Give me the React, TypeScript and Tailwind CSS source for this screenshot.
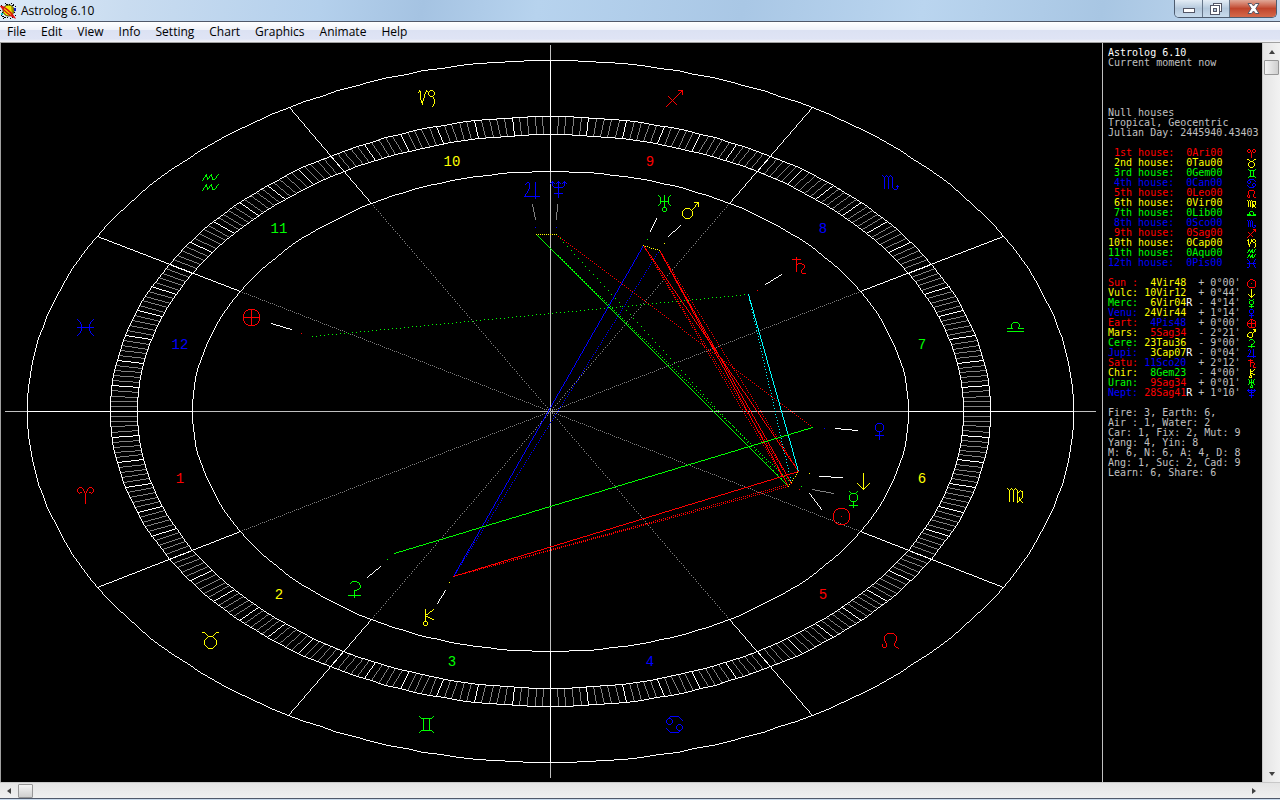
import React from "react";

type Point = [number, number];
type Glyph = number[][];

const RED = "#ff0000";
const YELLOW = "#ffff00";
const GREEN = "#00ff00";
const BLUE = "#0000ff";
const CYAN = "#00ffff";
const WHITE = "#ffffff";
const SILVER = "#c0c0c0";
const GRAY = "#808080";

const CX = 550;
const CY = 411;

/* ---------- pixel plotting ---------- */

function plotLine(x0: number, y0: number, x1: number, y1: number, skip = 0): string {
  let x = Math.round(x0);
  let y = Math.round(y0);
  const ex = Math.round(x1);
  const ey = Math.round(y1);
  const dx = Math.abs(ex - x);
  const dy = -Math.abs(ey - y);
  const sx = x < ex ? 1 : -1;
  const sy = y < ey ? 1 : -1;
  let err = dx + dy;
  let n = 0;
  let d = "";
  for (;;) {
    if (n % (skip + 1) === 0) d += `M${x} ${y}h1v1h-1z`;
    n++;
    if (x === ex && y === ey) break;
    const e2 = 2 * err;
    if (e2 >= dy) {
      err += dy;
      x += sx;
    }
    if (e2 <= dx) {
      err += dx;
      y += sy;
    }
  }
  return d;
}

function onEllipse(deg: number, rx: number, ry: number): Point {
  const a = (deg * Math.PI) / 180;
  return [CX + rx * Math.cos(a), CY - ry * Math.sin(a)];
}

/* Pixel centre for a label, cut towards the middle of the wheel. */
function labelPoint(deg: number, rx: number, ry: number): Point {
  const p = onEllipse(deg, rx, ry);
  return [CX + Math.trunc(p[0] - CX), CY + Math.trunc(p[1] - CY)];
}

function plotEllipse(rx: number, ry: number): string {
  let d = "";
  for (let a = 0; a < 360; a += 2) {
    const p = onEllipse(a, rx, ry);
    const q = onEllipse(a + 2, rx, ry);
    d += plotLine(p[0], p[1], q[0], q[1]);
  }
  return d;
}

function plotGlyph(glyph: Glyph, cx: number, cy: number, scale: number): string {
  let d = "";
  for (const line of glyph) {
    if (line.length === 2) {
      d += plotLine(cx + line[0] * scale, cy + line[1] * scale, cx + line[0] * scale, cy + line[1] * scale);
    }
    for (let i = 0; i + 3 < line.length; i += 2) {
      d += plotLine(
        cx + line[i] * scale,
        cy + line[i + 1] * scale,
        cx + line[i + 2] * scale,
        cy + line[i + 3] * scale,
      );
    }
  }
  return d;
}

/* ---------- glyphs on a -4..4 grid ---------- */

const DISC = [-1, -4, 1, -4, 2.5, -3.5, 3.5, -2.5, 4, -1, 4, 1, 3.5, 2.5, 2.5, 3.5, 1, 4, -1, 4, -2.5, 3.5, -3.5, 2.5, -4, 1, -4, -1, -3.5, -2.5, -2.5, -3.5, -1, -4];

const SIGNS: Record<string, Glyph> = {
  Ari: [
    [0, 4, 0, -1, -1, -3, -2, -4, -3, -4, -4, -3, -4, -2, -3, -1, -2, -1.5],
    [0, -1, 1, -3, 2, -4, 3, -4, 4, -3, 4, -2, 3, -1, 2, -1.5],
  ],
  Tau: [
    [-4, -4, -3, -4, -2, -3, -1, -2, 1, -2, 2, -3, 3, -4, 4, -4],
    [-1, -2, -3, 0, -3, 2, -1, 4, 1, 4, 3, 2, 3, 0, 1, -2],
  ],
  Gem: [
    [-3.5, -4, -2.5, -3, 2.5, -3, 3.5, -4],
    [-3.5, 4, -2.5, 3, 2.5, 3, 3.5, 4],
    [-1.5, -3, -1.5, 3],
    [1.5, -3, 1.5, 3],
  ],
  Can: [
    [4, -2, 2, -4, -2, -4, -4, -2, -4, -1, -3, 0, -2, 0, -1, -1, -1, -2, -2, -3, -3, -3, -4, -2],
    [-4, 2, -2, 4, 2, 4, 4, 2, 4, 1, 3, 0, 2, 0, 1, 1, 1, 2, 2, 3, 3, 3, 4, 2],
  ],
  Leo: [[-4, 2, -4, 3, -3.5, 3.5, -2.5, 3.5, -2, 2.5, -2, 1.5, -3, 0, -3, -2, -1.5, -3.5, 1.5, -3.5, 3, -2, 3, 0, 2, 1.5, 2, 2.5, 4, 4]],
  Vir: [
    [-4, -3.5, -3, -2.5, -3, 3],
    [-3, -2.5, -2, -3.5, -1, -2.5, -1, 3],
    [-1, -2.5, 0, -3.5, 1, -2.5, 1, 3],
    [1, -1, 2.5, -2.5, 3.5, -2, 3.5, 1, 1, 3.5],
    [2, 1, 2, 2, 3.5, 3.5],
  ],
  Lib: [
    [-4, 2, 4, 2],
    [-4, 0.5, -1.5, 0.5, -2, -0.5, -2, -1.5, -1, -2.5, 1, -2.5, 2, -1.5, 2, -0.5, 1.5, 0.5, 4, 0.5],
  ],
  Sco: [
    [-4, -3.5, -3, -2.5, -3, 3],
    [-3, -2.5, -2, -3.5, -1, -2.5, -1, 3],
    [-1, -2.5, 0, -3.5, 1, -2.5, 1, 2.5, 2, 3.5, 3, 3.5, 3.5, 3, 3.5, 1.5],
    [3, 2, 4, 2],
  ],
  Sag: [
    [-4, 4, 4, -4],
    [2, -4, 4, -4, 4, -2],
    [-3, -1, 1, 3],
  ],
  Cap: [
    [-4, -3, -3.5, -4, -3, -3, -3, 0, -2, 3, -2, 2, -0.5, -3, 0, -4, 1, -3],
    [1, -3, 2, -4, 3, -4, 4, -3, 4, -2, 3, -1, 2, -1, 1, -2, 1, -3],
    [3, -1, 4, 1, 4, 2.5, 3, 4],
  ],
  Aqu: [
    [-4, -1, -2, -4, -1.5, -1.5, 0.5, -4, 1, -1.5, 2, -1.5, 4, -4],
    [-4, 4, -2, 1, -1.5, 3.5, 0.5, 1, 1, 3.5, 2, 3.5, 4, 1],
  ],
  Pis: [
    [-4, -4, -2.5, -2.5, -2, -1, -2, 1, -2.5, 2.5, -4, 4],
    [4, -4, 2.5, -2.5, 2, -1, 2, 1, 2.5, 2.5, 4, 4],
    [-4, 0, 4, 0],
  ],
};

const BODIES: Record<string, Glyph> = {
  Sun: [DISC, [0, 0]],
  Vulc: [
    [0, -4, 0, 4],
    [-3, 1, 0, 4, 3, 1],
  ],
  Merc: [
    [-2, -4, -1, -3, 1, -3, 2, -4],
    [-1, -3, -2, -2, -2, 0, -1, 1, 1, 1, 2, 0, 2, -2, 1, -3],
    [0, 1, 0, 4],
    [-2, 3, 2, 3],
  ],
  Venu: [
    [-1, -4, -2, -3, -2, -1, -1, 0, 1, 0, 2, -1, 2, -3, 1, -4, -1, -4],
    [0, 0, 0, 4],
    [-2, 2, 2, 2],
  ],
  Eart: [DISC, [-4, 0, 4, 0], [0, -4, 0, 4]],
  Mars: [
    [-2.5, -1, -0.5, -1, 1, 0.5, 1, 2.5, -0.5, 4, -2.5, 4, -4, 2.5, -4, 0.5, -2.5, -1],
    [0.5, 0, 4, -4],
    [2, -4, 4, -4, 4, -2],
  ],
  Cere: [
    [-2, -3, -1, -4, 1, -4, 2, -3.5, 3, -2, 3, -1, 2, 0, 0, 0.5, 0, 4],
    [-3, 3, 3, 3],
  ],
  Jupi: [
    [-3.5, -3, -2.5, -4, -2, -4, -1.5, -3, -1.5, -1.5, -2.5, 1, -4, 3, 3.5, 3],
    [1.5, -4, 1.5, 4],
  ],
  Satu: [
    [-3, -3, 1, -3],
    [-1, -4, -1, 3],
    [-1, 0, 0, -1, 1.5, -1, 3, 0, 3, 1, 1.5, 2.5, 1.5, 3.5, 2.5, 4, 3.5, 4],
  ],
  Chir: [
    [-1, -4, -1, 2],
    [-1.5, 2, -0.5, 2, 0, 2.5, 0, 3.5, -0.5, 4, -1.5, 4, -2, 3.5, -2, 2.5, -1.5, 2],
    [3, -4, -1, -1, 3, 1],
  ],
  Uran: [
    [-3, -4, -2, -3, -2, 0, -3, 1],
    [3, -4, 2, -3, 2, 0, 3, 1],
    [-2, -1, 2, -1],
    [0, -4, 0, 2],
    [-0.5, 2, 0.5, 2, 1, 2.5, 1, 3.5, 0.5, 4, -0.5, 4, -1, 3.5, -1, 2.5, -0.5, 2],
  ],
  Nept: [
    [-3, -4, -3, -2, -2, -1, 2, -1, 3, -2, 3, -4],
    [-4, -3, -3, -4, -2, -3],
    [4, -3, 3, -4, 2, -3],
    [-1, -3, 0, -4, 1, -3],
    [0, -4, 0, 4],
    [-2, 2, 2, 2],
  ],
};

/* ---------- chart data ---------- */

interface House {
  label: string;
  sign: string;
  color: string;
}

const HOUSES: House[] = [
  { label: " 1st house:", sign: "Ari", color: RED },
  { label: " 2nd house:", sign: "Tau", color: YELLOW },
  { label: " 3rd house:", sign: "Gem", color: GREEN },
  { label: " 4th house:", sign: "Can", color: BLUE },
  { label: " 5th house:", sign: "Leo", color: RED },
  { label: " 6th house:", sign: "Vir", color: YELLOW },
  { label: " 7th house:", sign: "Lib", color: GREEN },
  { label: " 8th house:", sign: "Sco", color: BLUE },
  { label: " 9th house:", sign: "Sag", color: RED },
  { label: "10th house:", sign: "Cap", color: YELLOW },
  { label: "11th house:", sign: "Aqu", color: GREEN },
  { label: "12th house:", sign: "Pis", color: BLUE },
];

interface Body {
  name: string;
  color: string;
  place: string;
  placeColor: string;
  retro?: boolean;
  latitude: string;
  angle: number;
  at: Point;
  pointer: [number, number, number, number];
  faint?: boolean;
}

const PLANETS: Body[] = [
  { name: "Sun", color: RED, place: " 4Vir48", placeColor: YELLOW, latitude: "+ 0°00'", angle: -25.2, at: [841, 516], pointer: [809, 493, 821, 509] },
  { name: "Vulc", color: YELLOW, place: "10Vir12", placeColor: YELLOW, latitude: "+ 0°44'", angle: -19.8, at: [863, 481], pointer: [819, 476, 842, 477] },
  { name: "Merc", color: GREEN, place: " 6Vir04", placeColor: YELLOW, retro: true, latitude: "- 4°14'", angle: -23.9, at: [853, 499], pointer: [812, 489, 833, 493], faint: true },
  { name: "Venu", color: BLUE, place: "24Vir44", placeColor: YELLOW, latitude: "+ 1°14'", angle: -5.3, at: [879, 431], pointer: [835, 428, 857, 430] },
  { name: "Eart", color: RED, place: " 4Pis48", placeColor: BLUE, latitude: "+ 0°00'", angle: 154.8, at: [251, 317], pointer: [271, 323, 291, 329] },
  { name: "Mars", color: YELLOW, place: " 5Sag34", placeColor: RED, latitude: "- 2°21'", angle: 65.6, at: [690, 210], pointer: [680, 225, 668, 236] },
  { name: "Cere", color: GREEN, place: "23Tau36", placeColor: YELLOW, latitude: "- 9°00'", angle: 233.6, at: [354, 589], pointer: [380, 566, 367, 577] },
  { name: "Jupi", color: BLUE, place: " 3Cap07", placeColor: YELLOW, retro: true, latitude: "- 0°04'", angle: 93.1, at: [532, 190], pointer: [532, 204, 535, 219], faint: true },
  { name: "Satu", color: RED, place: "11Sco20", placeColor: BLUE, latitude: "+ 2°12'", angle: 41.3, at: [798, 265], pointer: [781, 274, 765, 284] },
  { name: "Chir", color: YELLOW, place: " 8Gem23", placeColor: GREEN, latitude: "- 4°00'", angle: 248.4, at: [427, 617], pointer: [445, 590, 437, 603] },
  { name: "Uran", color: GREEN, place: " 9Sag34", placeColor: RED, latitude: "+ 0°01'", angle: 69.4, at: [664, 203], pointer: [656, 218, 650, 231] },
  { name: "Nept", color: BLUE, place: "28Sag41", placeColor: RED, retro: true, latitude: "+ 1°10'", angle: 88.7, at: [558, 189], pointer: [557, 204, 556, 219], faint: true },
];

const ASPECTS: [string, string, string, number][] = [
  ["Nept", "Venu", RED, 1],
  ["Nept", "Sun", GREEN, 3],
  ["Jupi", "Merc", GREEN, 1],
  ["Jupi", "Sun", GREEN, 0],
  ["Jupi", "Nept", YELLOW, 1],
  ["Eart", "Satu", GREEN, 3],
  ["Mars", "Chir", BLUE, 1],
  ["Uran", "Chir", BLUE, 0],
  ["Uran", "Sun", RED, 1],
  ["Uran", "Merc", RED, 1],
  ["Uran", "Vulc", RED, 0],
  ["Mars", "Vulc", RED, 1],
  ["Mars", "Sun", RED, 0],
  ["Mars", "Merc", RED, 0],
  ["Uran", "Mars", YELLOW, 1],
  ["Satu", "Merc", CYAN, 2],
  ["Satu", "Vulc", CYAN, 0],
  ["Chir", "Sun", RED, 1],
  ["Chir", "Merc", RED, 1],
  ["Chir", "Vulc", RED, 0],
  ["Cere", "Venu", GREEN, 0],
  ["Sun", "Vulc", YELLOW, 1],
];

const MENU = ["File", "Edit", "View", "Info", "Setting", "Chart", "Graphics", "Animate", "Help"];

function aspectPoint(name: string): Point {
  const body = PLANETS.find((p) => p.name === name)!;
  return onEllipse(body.angle, 263.5, 177);
}

/* ---------- wheel ---------- */

function Wheel() {
  let minor = "";
  let major = "";
  let spokes = "";
  let dotted = "";
  for (let a = 0; a < 360; a++) {
    const p = onEllipse(a, 413, 277);
    const q = onEllipse(a, 440, 295);
    const d = plotLine(p[0], p[1], q[0], q[1]);
    if (a % 5 === 0) major += d;
    else minor += d;
    if (a % 30 === 0) {
      const inner = onEllipse(a, 358, 240);
      const outer = onEllipse(a, 523, 351);
      spokes += plotLine(inner[0], inner[1], outer[0], outer[1]);
      if (a % 90 !== 0) dotted += plotLine(CX, CY, inner[0], inner[1], 1);
    }
  }
  const axes = plotLine(5, CY, 1095, CY) + plotLine(CX, 45, CX, 777);
  const circles = plotEllipse(523, 351) + plotEllipse(440, 295) + plotEllipse(413, 277) + plotEllipse(358, 240);

  return (
    <svg
      viewBox="1 43 1101 739"
      className="block h-full w-full"
      shapeRendering="crispEdges"
      role="img"
      aria-label="Astrological wheel"
    >
      <path d={axes} fill={SILVER} />
      <path d={dotted} fill={GRAY} />
      <path d={minor} fill={GRAY} />
      <path d={major + spokes + circles} fill={WHITE} />
      {ASPECTS.map(([a, b, color, skip]) => {
        const p = aspectPoint(a);
        const q = aspectPoint(b);
        return <path key={a + b} d={plotLine(p[0], p[1], q[0], q[1], skip)} fill={color} />;
      })}
      {PLANETS.map((p) => {
        const dot = onEllipse(p.angle, 275, 184);
        return (
          <g key={p.name}>
            <path d={plotLine(...p.pointer)} fill={p.faint ? GRAY : WHITE} />
            <path d={plotLine(dot[0], dot[1], dot[0], dot[1]) + plotGlyph(BODIES[p.name], p.at[0], p.at[1], 2)} fill={p.color} />
          </g>
        );
      })}
      {HOUSES.map((h, i) => {
        const a = 195 + i * 30;
        const g = labelPoint(a, 482, 325);
        const n = labelPoint(a, 385, 259);
        return (
          <g key={h.sign} fill={h.color}>
            <path d={plotGlyph(SIGNS[h.sign], g[0], g[1], 2)} />
            <text
              x={n[0] + 1}
              y={n[1] + 5}
              textAnchor="middle"
              className="font-['Liberation_Mono',monospace] text-[14px]"
            >
              {i + 1}
            </text>
          </g>
        );
      })}
    </svg>
  );
}

/* ---------- side panel ---------- */

function SmallGlyph({ glyph, color }: { glyph: Glyph; color: string }) {
  return (
    <svg viewBox="-4 -5 9 10" className="ml-auto block h-[10px] w-[9px]" shapeRendering="crispEdges" aria-hidden="true">
      <path d={plotGlyph(glyph, 0, 0, 1)} fill={color} />
    </svg>
  );
}

function SidePanel() {
  return (
    <aside className="w-[160px] shrink-0 overflow-hidden border-l border-[#c0c0c0] pt-[5px] pr-[6px] pl-[5px] font-['DejaVu_Sans_Mono',monospace] text-[10px] leading-[10px] whitespace-pre text-[#c0c0c0]">
      <h1 className="text-white">Astrolog 6.10</h1>
      <p>Current moment now</p>
      <div className="mt-10">
        <p>Null houses</p>
        <p>Tropical, Geocentric</p>
        <p>Julian Day: 2445940.43403</p>
      </div>
      <table className="mt-[10px] w-full" aria-label="Houses">
        <tbody>
          {HOUSES.map((h) => (
            <tr key={h.sign} className="h-[10px]" style={{ color: h.color }}>
              <th scope="row" className="p-0 text-left font-normal">
                {h.label + "  "}
              </th>
              <td className="w-full p-0">{`0${h.sign}00`}</td>
              <td className="p-0">
                <SmallGlyph glyph={SIGNS[h.sign]} color={h.color} />
              </td>
            </tr>
          ))}
        </tbody>
      </table>
      <table className="mt-[10px] w-full" aria-label="Planets">
        <tbody>
          {PLANETS.map((p) => (
            <tr key={p.name} className="h-[10px]">
              <th scope="row" className="p-0 text-left font-normal" style={{ color: p.color }}>
                {p.name.padEnd(4) + ": "}
              </th>
              <td className="p-0" style={{ color: p.placeColor }}>
                {p.place}
                <span className="text-white">{p.retro ? "R " : "  "}</span>
              </td>
              <td className="w-full p-0">{p.latitude}</td>
              <td className="p-0">
                <SmallGlyph glyph={BODIES[p.name]} color={p.color} />
              </td>
            </tr>
          ))}
        </tbody>
      </table>
      <div className="mt-[10px]">
        <p>Fire: 3, Earth: 6,</p>
        <p>Air : 1, Water: 2</p>
        <p>Car: 1, Fix: 2, Mut: 9</p>
        <p>Yang: 4, Yin: 8</p>
        <p>M: 6, N: 6, A: 4, D: 8</p>
        <p>Ang: 1, Suc: 2, Cad: 9</p>
        <p>Learn: 6, Share: 6</p>
      </div>
    </aside>
  );
}

/* ---------- window chrome ---------- */

function AppIcon() {
  return (
    <svg viewBox="0 0 16 16" className="block h-4 w-4" aria-hidden="true">
      <path
        d="M1 2h1M5 0h1M9 1h1M13 1h1M15 3h1M3 4h1M0 7h1M1 12h1M3 15h1M7 14h1M10 15h1M14 9h1M12 14h1M2 9h1M15 12h1M11 0h1M2 13h2M4 14h2M6 1h2M12 2h2"
        transform="translate(0 .5)"
        stroke="#000"
        strokeWidth="1"
      />
      <circle cx="8.5" cy="7.5" r="5.5" fill="#f0e800" stroke="#303000" strokeWidth="1" />
      <path d="M11 3.500a5 5 0 0 1 1 8z" fill="#a09000" />
      <path d="M1 3.500C4 3 12 10 14.500 14.500C10 13 3 7 1 3.500z" fill="none" stroke="#e01010" strokeWidth="1.500" />
      <path d="M14 5h2v3h-2z" fill="#1020c0" />
      <path d="M1 10h2v2H1z" fill="#10c0c0" />
    </svg>
  );
}

function TitleBar() {
  return (
    <header className="flex h-[22px] shrink-0 items-start border-b border-[#50596a] bg-[linear-gradient(100deg,#dbe9f7_0%,#c9dcf0_10%,#b4d0ec_25%,#a5c3e2_33%,#b7d3ee_42%,#a9c7e5_58%,#bad5ef_72%,#a8c6e3_86%,#c4daf0_100%)]">
      <div className="flex h-full items-center gap-[5px]">
        <AppIcon />
        <span className="font-['Open_Sans','Noto_Sans',sans-serif] text-[12px] leading-5 text-black">Astrolog 6.10</span>
      </div>
      <div className="mr-[3px] ml-auto flex h-[18px] overflow-hidden rounded-b-[5px] border border-t-0 border-[#4d5b6e]">
        <button
          type="button"
          aria-label="Minimize"
          className="flex w-7 items-center justify-center border-r border-[#66768a] bg-linear-to-b from-[#e4edf6] via-[#b4c8dc] to-[#c8dbec]"
        >
          <svg viewBox="0 0 12 5" className="mt-1 h-[5px] w-3" shapeRendering="crispEdges" aria-hidden="true">
            <rect x="0" y="0" width="12" height="5" fill="#535666" />
            <rect x="1" y="1" width="10" height="3" fill="#fff" />
          </svg>
        </button>
        <button
          type="button"
          aria-label="Restore"
          className="flex w-[27px] items-center justify-center border-r border-[#66768a] bg-linear-to-b from-[#e4edf6] via-[#b4c8dc] to-[#c8dbec]"
        >
          <svg viewBox="0 0 12 12" className="h-3 w-3" shapeRendering="crispEdges" aria-hidden="true">
            <rect x="3.5" y="0.5" width="8" height="8" fill="#fff" stroke="#535666" />
            <rect x="0.5" y="2.5" width="9" height="9" fill="#fff" stroke="#535666" />
            <rect x="3.5" y="5.5" width="3" height="3" fill="#b4c8dc" stroke="#535666" />
          </svg>
        </button>
        <button
          type="button"
          aria-label="Close"
          className="flex w-[46px] items-center justify-center bg-linear-to-b from-[#e0a898] via-[#c0452c] to-[#d5694a]"
        >
          <svg viewBox="0 0 13 11" className="h-[11px] w-[13px]" aria-hidden="true">
            <path
              d="M1 .5h3.500l2 2.500 2-2.500H12L8.800 5.500 12 10.500H8.500l-2-2.500-2 2.500H1l3.200-5z"
              fill="#fff"
              stroke="#535666"
              strokeWidth="1"
            />
          </svg>
        </button>
      </div>
    </header>
  );
}

function MenuBar() {
  return (
    <nav
      aria-label="Main menu"
      className="flex h-[21px] shrink-0 items-center gap-px border-b border-[#a0a0a0] bg-[linear-gradient(#ffffff_0%,#f0f3fa_38%,#dce2f3_42%,#dfe4f5_85%,#f4f4f6_100%)]"
    >
      {MENU.map((m) => (
        <button
          key={m}
          type="button"
          className="px-[7px] font-['Open_Sans','Noto_Sans',sans-serif] text-[12px] leading-[18px] text-black"
        >
          {m}
        </button>
      ))}
    </nav>
  );
}

function Arrow({ d }: { d: string }) {
  return (
    <svg viewBox="0 0 8 8" className="block h-2 w-2" aria-hidden="true">
      <path d={d} fill="#404040" />
    </svg>
  );
}

export default function App() {
  return (
    <div className="flex h-screen flex-col overflow-hidden bg-[#f0f0f0]">
      <TitleBar />
      <MenuBar />
      <div className="flex min-h-0 flex-1 bg-black">
        <main className="min-w-0 flex-1 border-l border-[#a0a0a0]">
          <Wheel />
        </main>
        <SidePanel />
        <div className="flex w-[18px] shrink-0 flex-col items-center border-l border-[#c8c8c8] bg-linear-to-r from-[#e4e4e4] to-[#f2f2f2]">
          <button type="button" aria-label="Scroll up" className="flex h-[17px] w-full items-center justify-center">
            <Arrow d="M4 2l3 4H1z" />
          </button>
          <div className="h-[15px] w-[15px] rounded-[1px] border border-[#979797] bg-linear-to-r from-[#f5f5f5] to-[#cfcfcf]" />
          <button type="button" aria-label="Scroll down" className="mt-auto flex h-[17px] w-full items-center justify-center">
            <Arrow d="M4 6l3-4H1z" />
          </button>
        </div>
      </div>
      <div className="flex h-4 shrink-0 items-center border-t border-[#c8c8c8] bg-linear-to-b from-[#e4e4e4] to-[#f0f0f0] pr-[18px]">
        <button type="button" aria-label="Scroll left" className="flex h-full w-[18px] items-center justify-center">
          <Arrow d="M2 4l4-3v6z" />
        </button>
        <div className="h-[14px] w-[15px] rounded-[1px] border border-[#979797] bg-linear-to-b from-[#f5f5f5] to-[#cfcfcf]" />
        <button type="button" aria-label="Scroll right" className="ml-auto flex h-full w-4 items-center justify-center">
          <Arrow d="M6 4L2 1v6z" />
        </button>
      </div>
      <div className="h-[2px] shrink-0 border-t border-[#50596a] bg-[#c9daec]" />
    </div>
  );
}
